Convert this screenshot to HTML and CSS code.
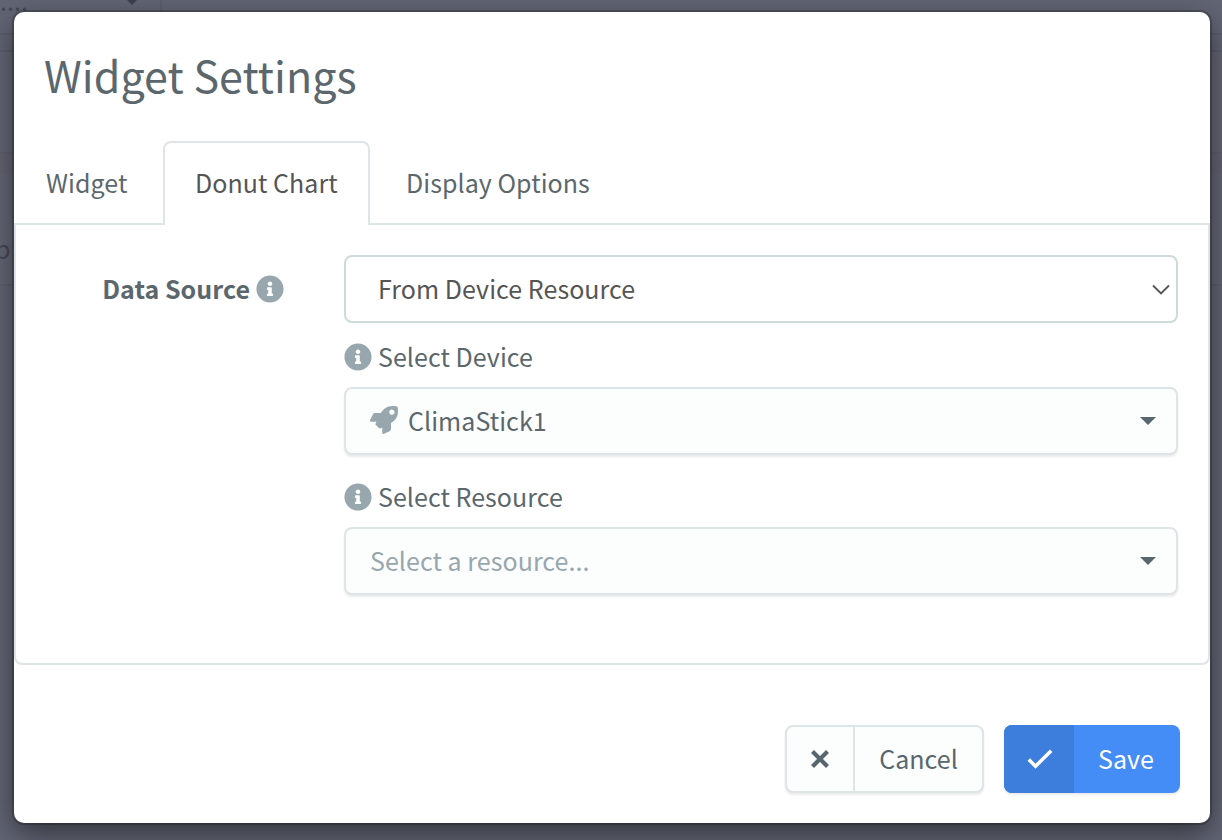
FILE: index.html
```html
<!DOCTYPE html>
<html lang="en">
<head>
<meta charset="utf-8">
<title>Widget Settings</title>
<link rel="stylesheet" href="styles.css">
</head>
<body>
<svg class="sprite" aria-hidden="true">
  <symbol id="info" viewBox="0 0 512 512"><path fill="currentColor" d="M256 8C119 8 8 119 8 256s111 248 248 248 248-111 248-248S393 8 256 8zm0 110c23.200 0 42 18.800 42 42s-18.800 42-42 42-42-18.800-42-42 18.800-42 42-42zm56 254c0 6.600-5.400 12-12 12h-88c-6.600 0-12-5.400-12-12v-24c0-6.600 5.400-12 12-12h12v-64h-12c-6.600 0-12-5.400-12-12v-24c0-6.600 5.400-12 12-12h64c6.600 0 12 5.400 12 12v100h12c6.600 0 12 5.400 12 12v24z"/></symbol>
</svg>
<div class="backdrop" aria-hidden="true">
  <div class="bg-top"><span class="bg-dots">....</span><i class="bg-caret"></i></div>
  <div class="bg-gap"></div>
  <div class="bg-row"></div>
  <div class="bg-strip"></div>
  <div class="bg-body"><span class="bg-letter">p</span></div>
</div>
<main class="modal" role="dialog" aria-labelledby="title">
  <h1 class="title" id="title">Widget Settings</h1>
  <nav class="tabs">
    <a class="tab tab-first">Widget</a>
    <a class="tab tab-active">Donut Chart</a>
    <a class="tab tab-last">Display Options</a>
  </nav>
  <section class="panel">
    <div class="label"><span>Data Source</span><svg class="info"><use href="#info"/></svg></div>
    <div class="fields">
      <div class="select native"><span>From Device Resource</span>
        <svg class="chevron" viewBox="0 0 18 12"><path d="M1 1.500 9 9.500 17 1.500" fill="none" stroke="currentColor" stroke-width="1.800"/></svg>
      </div>
      <div class="sublabel"><svg class="info"><use href="#info"/></svg><span>Select Device</span></div>
      <div class="select combo">
        <svg class="rocket" viewBox="0 0 512 512"><path fill="currentColor" d="M505.100 19.100C503.800 13 499 8.200 492.900 6.900 460.700 0 435.500 0 410.400 0 307.200 0 245.300 55.200 199.100 128H94.900c-18.200 0-34.800 10.300-42.900 26.500L2.600 253.300c-8 16 3.600 34.700 21.500 34.700h95.100c-5.900 12.800-11.900 25.500-18 37.700-3.100 6.200-1.900 13.600 3 18.500l63.600 63.600c4.900 4.900 12.300 6.100 18.500 3 12.200-6.100 24.900-12 37.700-17.900V488c0 17.800 18.800 29.400 34.700 21.500l98.700-49.400c16.300-8.100 26.500-24.800 26.500-42.900V312.800c72.600-46.300 128-108.400 128-211.100.1-25.200.1-50.400-6.800-82.600zM400 160c-26.500 0-48-21.500-48-48s21.500-48 48-48 48 21.500 48 48-21.500 48-48 48z" /></svg>
        <span>ClimaStick1</span><i class="caret"></i>
      </div>
      <div class="sublabel second"><svg class="info"><use href="#info"/></svg><span>Select Resource</span></div>
      <div class="select combo"><span class="placeholder">Select a resource...</span><i class="caret"></i></div>
    </div>
  </section>
  <footer class="actions">
    <button class="btn cancel"><span class="btn-icon"><svg class="x" viewBox="0 0 20 20"><path d="M2.500 2.500l15 15M17.500 2.500l-15 15" fill="none" stroke="currentColor" stroke-width="4.200"/></svg></span><span class="btn-text">Cancel</span></button>
    <button class="btn save"><span class="btn-icon"><svg class="check" viewBox="0 0 26 20"><path d="M1.800 10.500l6.700 6.700L24.200 1.800" fill="none" stroke="currentColor" stroke-width="3.500"/></svg></span><span class="btn-text">Save</span></button>
  </footer>
</main>
</body>
</html>
```
FILE: styles.css
```css
* { box-sizing: border-box; }
body {
  margin: 0;
  width: 1222px;
  height: 840px;
  overflow: hidden;
  position: relative;
  padding: 12px 12px 17px 14px;
  background: #626574;
  color: #5b676d;
  font-family: "Noto Sans CJK SC", "Noto Sans", sans-serif;
  font-size: 25px;
  line-height: 40px;
  letter-spacing: .05px;
}
.sprite { position: absolute; width: 0; height: 0; }

/* Dimmed page behind the dialog */
.backdrop { position: absolute; inset: 0; overflow: hidden; color: #454856; }
.bg-top { height: 35px; border-bottom: 2px solid #5c5f6d; position: relative; }
.bg-top::after { content: ""; position: absolute; left: 160px; top: 0; width: 2px; height: 33px; background: #5c5f6d; }
.bg-dots { position: absolute; left: 0; top: -18px; font-size: 25px; line-height: 36px; }
.bg-caret { position: absolute; left: 127px; top: 0; border: 5px solid transparent; border-top-color: #3c3f4c; border-bottom: 0; }
.bg-gap { height: 17px; border-bottom: 2px solid #5c5f6d; }
.bg-row { height: 102px; background: #646674; border-bottom: 2px solid #5e606d; }
.bg-strip { height: 20px; background: #626472; }
.bg-body { height: 112px; position: relative; background: #646675; border-bottom: 2px solid #5e606e; }
.bg-letter { position: absolute; left: -5px; top: 54px; }

.modal {
  position: relative;
  height: 811px;
  border-radius: 10px;
  background: #fff;
  box-shadow: 0 0 0 2px rgba(0, 0, 0, .2), 0 10px 30px rgba(0, 0, 0, .5);
}
.title { margin: 0; padding: 30px 30px 0; height: 129px; font-size: 43px; font-weight: 400; line-height: 64px; }

.tabs { display: flex; height: 84px; position: relative; z-index: 1; }
.tab { padding-top: 21px; border-bottom: 2px solid #dee5e7; height: 84px; white-space: nowrap; }
.tab-first { width: 149px; padding-left: 32px; }
.tab-active { width: 207px; padding: 19px 0 0 30px; color: #555; border: 2px solid #dee5e7; border-bottom: 0; border-radius: 8px 8px 0 0; }
.tab-last { flex: 1; padding-left: 36px; }

.panel {
  display: flex;
  height: 440px;
  padding: 30px 30px 0 0;
  border: 2px solid #dee5e7;
  border-top: 0;
  border-radius: 0 0 8px 8px;
}
.label { width: 328px; padding: 13px 60px 0 0; display: flex; justify-content: flex-end; gap: 6px; font-weight: 700; white-space: nowrap; }
.info { width: 28px; height: 28px; color: #98a6ad; flex: none; }
.label .info { margin-top: 6.500px; }
.fields { flex: 1; }
.select { display: flex; align-items: center; height: 68px; border: 2px solid #dee5e7; border-radius: 8px; white-space: nowrap; }
.select span { margin-top: -2px; }
.native { padding: 0 6px 0 32px; justify-content: space-between; border-color: #cfdadd; color: #555; }
.chevron { width: 18px; height: 12px; margin-top: 1px; }
.combo { padding: 0 20px 0 24px; background: #fcfdfd; box-shadow: 0 2px 2px rgba(90, 90, 90, .12); }
.sublabel { display: flex; gap: 6px; height: 64px; padding-top: 13px; white-space: nowrap; }
.sublabel .info { margin-top: 6.500px; }
.second { height: 72px; padding-top: 21px; }
.rocket { width: 28px; height: 28px; margin: -2px 10px 0 0; color: #98a6ad; }
.select .placeholder { color: #98a6ad; }
.caret { margin-left: auto; border: 8px solid transparent; border-top-color: #58666e; border-bottom: 0; }

.actions { display: flex; justify-content: flex-end; gap: 20px; padding: 60px 30px 0 0; }
.btn { display: flex; height: 68px; padding: 0; border: 2px solid #dee5e7; border-radius: 8px; overflow: hidden; background: #fcfdfd; color: #58666e; font: inherit; letter-spacing: inherit; box-shadow: 0 2px 2px rgba(90, 90, 90, .12); }
.btn-icon { display: flex; align-items: center; justify-content: center; height: 100%; }
.btn-text { line-height: 62px; flex: 1; text-align: center; }
.cancel { width: 199px; }
.cancel .btn-icon { width: 68px; border-right: 2px solid #dee5e7; }
.save { width: 176px; border: 0; background: #448cf6; color: #fff; }
.save .btn-text { line-height: 66px; padding-right: 2px; }
.save .btn-icon { width: 70px; padding-left: 1px; background: #3d7edd; }
.x { width: 20px; height: 20px; }
.check { width: 26px; height: 20px; }
```
